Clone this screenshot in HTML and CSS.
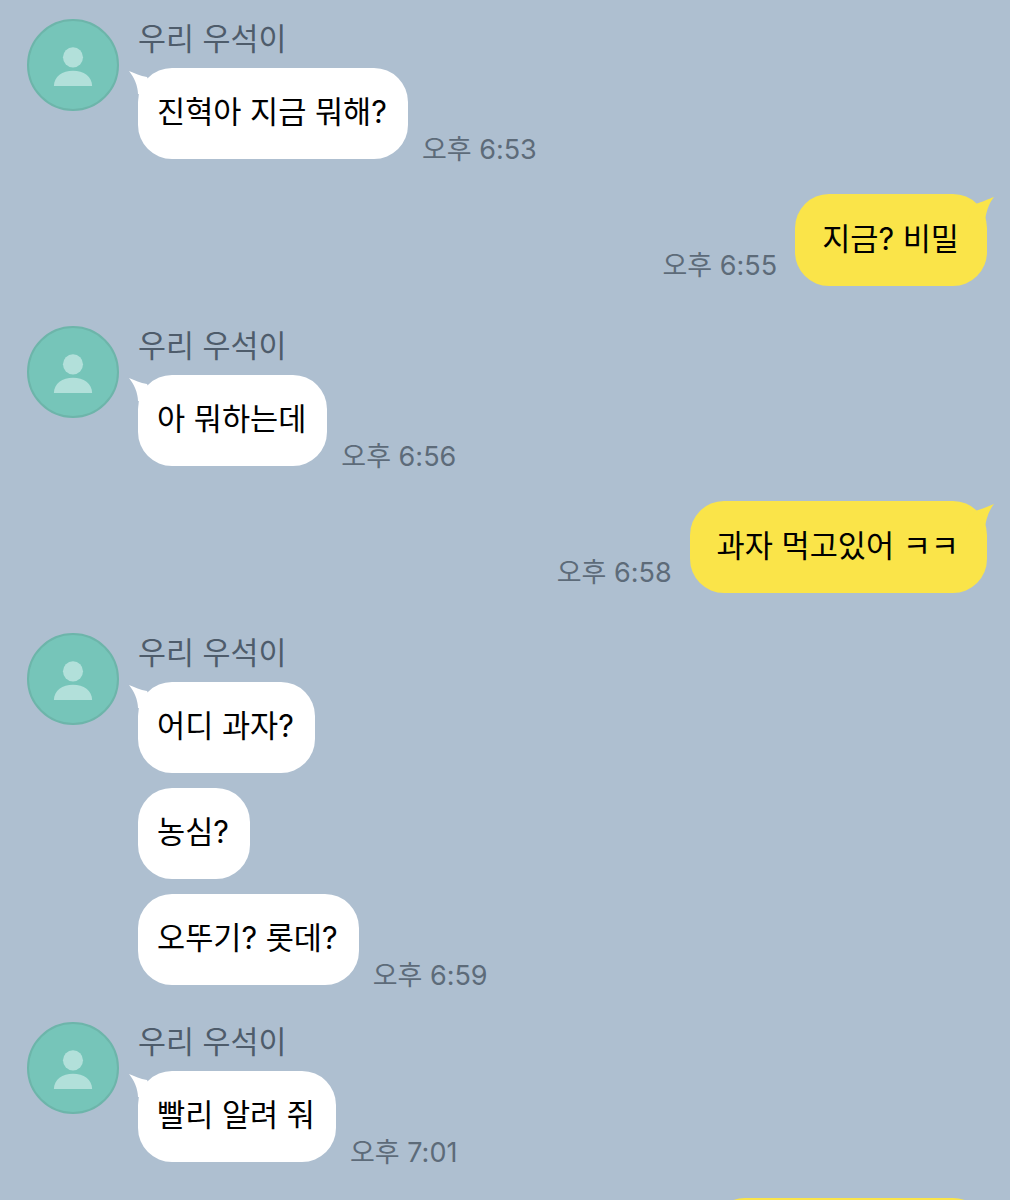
FILE: index.html
```html
<!DOCTYPE html>
<html lang="ko">
<head>
  <title>우리 우석이</title>
  <meta charset="UTF-8">
  <link rel="stylesheet" href="styles.css">
</head>
<body>
  <div class="chat">
    <div class="group">
      <div class="avatar"><svg viewBox="0 0 92 92"><circle cx="46" cy="38" r="10.5"/><path d="M26 68c0-10 9-16 20-16s20 6 20 16z"/></svg></div>
      <div class="col">
        <div class="name">우리 우석이</div>
        <div class="line">
          <div class="bubble in"><svg class="tail" viewBox="0 0 30 30"><path d="M1 1C7 3 12 6 19 7L30 30 10 24C10 16 6 7 1 1z"/></svg>진혁아 지금 뭐해?</div>
          <span class="time">오후 6:53</span>
        </div>
      </div>
    </div>

    <div class="line mine">
      <span class="time">오후 6:55</span>
      <div class="bubble out"><svg class="tail" viewBox="0 0 30 30"><path d="M29 1C23 3 18 6 10 8L0 30 20 28C20 18 24 7 29 1z"/></svg>지금? 비밀</div>
    </div>

    <div class="group">
      <div class="avatar"><svg viewBox="0 0 92 92"><circle cx="46" cy="38" r="10.5"/><path d="M26 68c0-10 9-16 20-16s20 6 20 16z"/></svg></div>
      <div class="col">
        <div class="name">우리 우석이</div>
        <div class="line">
          <div class="bubble in"><svg class="tail" viewBox="0 0 30 30"><path d="M1 1C7 3 12 6 19 7L30 30 10 24C10 16 6 7 1 1z"/></svg>아 뭐하는데</div>
          <span class="time">오후 6:56</span>
        </div>
      </div>
    </div>

    <div class="line mine">
      <span class="time">오후 6:58</span>
      <div class="bubble out"><svg class="tail" viewBox="0 0 30 30"><path d="M29 1C23 3 18 6 10 8L0 30 20 28C20 18 24 7 29 1z"/></svg>과자 먹고있어 ㅋㅋ</div>
    </div>

    <div class="group long">
      <div class="avatar"><svg viewBox="0 0 92 92"><circle cx="46" cy="38" r="10.5"/><path d="M26 68c0-10 9-16 20-16s20 6 20 16z"/></svg></div>
      <div class="col">
        <div class="name">우리 우석이</div>
        <div class="line">
          <div class="bubble in"><svg class="tail" viewBox="0 0 30 30"><path d="M1 1C7 3 12 6 19 7L30 30 10 24C10 16 6 7 1 1z"/></svg>어디 과자?</div>
        </div>
        <div class="line next">
          <div class="bubble in">농심?</div>
        </div>
        <div class="line next">
          <div class="bubble in">오뚜기? 롯데?</div>
          <span class="time">오후 6:59</span>
        </div>
      </div>
    </div>

    <div class="group last">
      <div class="avatar"><svg viewBox="0 0 92 92"><circle cx="46" cy="38" r="10.5"/><path d="M26 68c0-10 9-16 20-16s20 6 20 16z"/></svg></div>
      <div class="col">
        <div class="name">우리 우석이</div>
        <div class="line">
          <div class="bubble in"><svg class="tail" viewBox="0 0 30 30"><path d="M1 1C7 3 12 6 19 7L30 30 10 24C10 16 6 7 1 1z"/></svg>빨리 알려 줘</div>
          <span class="time">오후 7:01</span>
        </div>
      </div>
    </div>

    <div class="line mine">
      <div class="bubble out cut"></div>
    </div>
  </div>
</body>
</html>
```

FILE: styles.css
```css
html, body {
  margin: 0;
  height: 1200px;
  overflow: hidden;
}
body {
  background-color: #aebfd0;
  font-family: Inter, "Noto Sans CJK KR", sans-serif;
  color: #000;
}
.chat {
  height: 1181px;
  overflow: hidden;
  padding: 19px 23px 0 27px;
  display: flex;
  flex-direction: column;
}
.group {
  display: flex;
  gap: 19px;
  margin-bottom: 35px;
}
.group.long {
  margin-bottom: 37px;
}
.group.last {
  margin-bottom: 36px;
}
.avatar {
  width: 92px;
  height: 92px;
  flex: none;
  box-sizing: border-box;
  border: 2px solid #6db5aa;
  border-radius: 50%;
  background-color: #76c5b9;
  overflow: hidden;
}
.avatar svg {
  display: block;
  width: 88px;
  height: 88px;
  fill: #b2e0da;
}
.name {
  height: 49px;
  font-size: 30.4px;
  line-height: 40px;
  color: #4e5c6b;
}
.line {
  display: flex;
  align-items: flex-end;
  gap: 14px;
}
.line.next {
  margin-top: 15px;
}
.line.mine {
  flex: none;
  justify-content: flex-end;
  gap: 18px;
  margin-bottom: 40px;
}
.bubble {
  position: relative;
  flex: none;
  height: 91px;
  box-sizing: border-box;
  padding: 0 21px 0 19px;
  border-radius: 34px;
  font-size: 30.6px;
  line-height: 88px;
  white-space: nowrap;
}
.in {
  background-color: #fff;
}
.out {
  background-color: #fae449;
  padding: 0 28px 0 27px;
  height: 92px;
  line-height: 90px;
}
.cut {
  width: 276px;
}
.tail {
  position: absolute;
  top: 2px;
  width: 30px;
  height: 30px;
}
.in .tail {
  left: -10px;
  fill: #fff;
}
.out .tail {
  right: -8px;
  fill: #fae449;
}
.time {
  font-size: 27px;
  line-height: 32px;
  color: #5d6b79;
  white-space: nowrap;
  margin-bottom: -7px;
}
.mine .time {
  margin-bottom: 4px;
}
```
